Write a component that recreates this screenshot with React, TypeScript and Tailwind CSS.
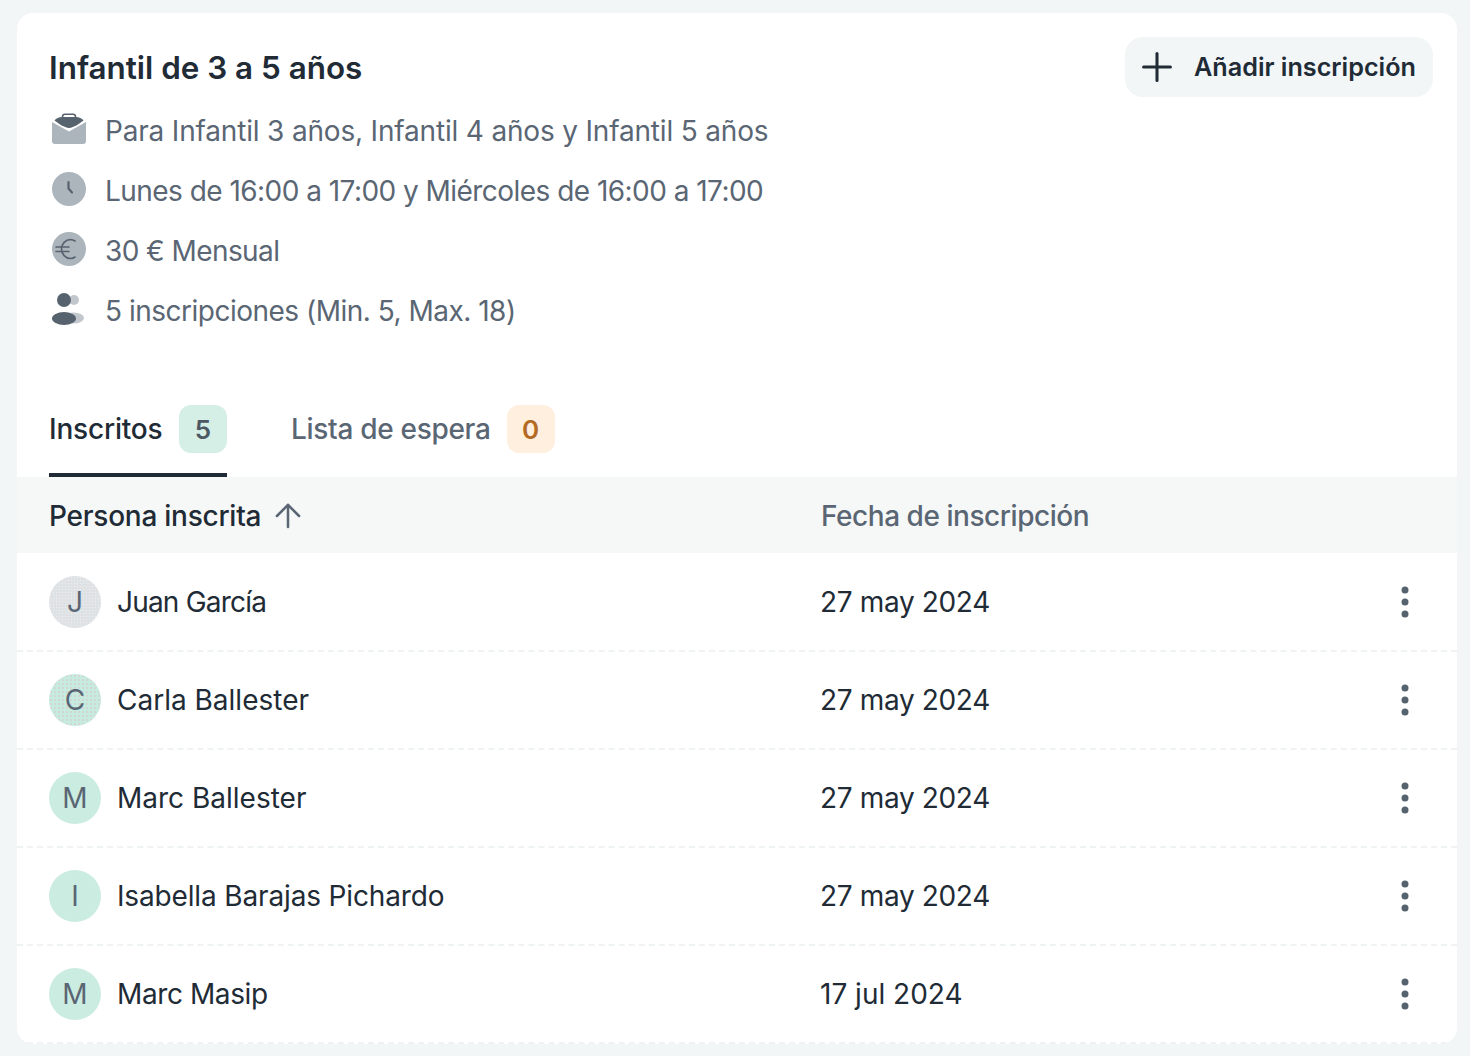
import { ArrowUp, Plus } from "lucide-react";
import type { ReactNode } from "react";

const rows = [
  { name: "Juan García", initial: "J", date: "27 may 2024", tone: "grey", nameFit: "tracking-[-0.8px]", dateFit: "tracking-[-0.35px]" },
  { name: "Carla Ballester", initial: "C", date: "27 may 2024", tone: "dots", nameFit: "", dateFit: "tracking-[-0.35px]" },
  { name: "Marc Ballester", initial: "M", date: "27 may 2024", tone: "green", nameFit: "", dateFit: "tracking-[-0.35px]" },
  { name: "Isabella Barajas Pichardo", initial: "I", date: "27 may 2024", tone: "green", nameFit: "tracking-[-0.15px]", dateFit: "tracking-[-0.35px]" },
  { name: "Marc Masip", initial: "M", date: "17 jul 2024", tone: "green", nameFit: "tracking-[-0.4px]", dateFit: "" },
];

function BriefcaseIcon() {
  return (
    <svg width="36" height="36" viewBox="0 0 36 36" fill="none">
      <path d="M1 11l17 9.500L35 11v19a3 3 0 0 1-3 3H4a3 3 0 0 1-3-3z" fill="#acb4bc" />
      <path d="M3.500 9.500C5 7.500 8 6 11 6h14c3 0 6 1.500 7.500 3.500C28 13 23 16.500 18 17 13 16.500 8 13 3.500 9.500z" fill="#57626f" />
      <path d="M11.500 6.500V5.500C11.500 4 12.500 3.200 14 3.200h8c1.500 0 2.500.8 2.500 2.300v1" stroke="#57626f" strokeWidth="1.600" />
    </svg>
  );
}

function ClockIcon() {
  return (
    <svg width="36" height="36" viewBox="0 0 36 36" fill="none">
      <circle cx="18" cy="18" r="17" fill="#acb4bc" />
      <path d="M17.500 11v6.500l3.500 4" stroke="#57626f" strokeWidth="2.200" strokeLinecap="round" strokeLinejoin="round" />
    </svg>
  );
}

function EuroIcon() {
  return (
    <svg width="36" height="36" viewBox="0 0 36 36" fill="none">
      <circle cx="18" cy="18" r="17" fill="#acb4bc" />
      <path d="M24 10a9 9 0 0 0-4.500-1.500c-5 0-9 4.500-9 9.500s4 9.500 9 9.500A9 9 0 0 0 24 26M5 16h13M5 20.500h13" stroke="#57626f" strokeWidth="1.600" strokeLinecap="round" />
    </svg>
  );
}

function PeopleIcon() {
  return (
    <svg width="36" height="36" viewBox="0 0 36 36" fill="none">
      <circle cx="23" cy="9" r="5" fill="#c2c7cd" />
      <ellipse cx="22" cy="27" rx="11" ry="5.500" fill="#c2c7cd" />
      <circle cx="13" cy="9" r="7" fill="#57626f" />
      <ellipse cx="13" cy="27.500" rx="12" ry="6.500" fill="#57626f" />
    </svg>
  );
}

function InfoRow({ icon, fit, children }: { icon: ReactNode; fit: string; children: ReactNode }) {
  return (
    <div className="flex h-[60px] items-center gap-[18px]">
      <div className="-mt-[4px] ml-[2px] flex h-[36px] w-[36px] items-center justify-center">{icon}</div>
      <span className={`text-[28px] text-[#5a6673] ${fit}`}>{children}</span>
    </div>
  );
}

function Avatar({ initial, tone }: { initial: string; tone: string }) {
  const toneClass =
    tone === "grey"
      ? "bg-[#dfe2e5] bg-[radial-gradient(#eceef0_1px,transparent_1px)] bg-[length:3px_3px]"
      : tone === "dots"
        ? "bg-[#c6ecdf] bg-[radial-gradient(#d4d6d6_0.8px,transparent_0.8px)] bg-[length:4px_4px]"
        : "bg-[#cbece1]";
  return (
    <div className={`flex h-[52px] w-[52px] shrink-0 items-center justify-center rounded-full text-[28px] text-[#5a6673] ${toneClass}`}>
      {initial}
    </div>
  );
}

export default function App() {
  return (
    <div className="h-[1056px] w-[1470px] overflow-hidden bg-[#f2f6f6] pl-[17px] pr-[13px] pt-[13px] font-['Inter',sans-serif] text-[#212b36]">
      <div className="h-[1031px] overflow-hidden rounded-[16px] bg-white">
        <div className="relative h-[464px] pl-[32px] pt-[24px]">
          <div className="flex h-[60px] items-center pt-[4px]">
            <h1 className="text-[31.4px] font-semibold">Infantil de 3 a 5 años</h1>
          </div>
          <button className="absolute right-[24px] top-[24px] flex h-[60px] w-[308px] items-center gap-[14px] rounded-[18px] bg-[#f2f6f6] pl-[9px] text-[25.2px] font-semibold">
            <Plus size={46} strokeWidth={1.6} className="shrink-0" />
            <span className="pt-[2px]">Añadir inscripción</span>
          </button>

          <div className="mt-[4px]">
            <InfoRow icon={<BriefcaseIcon />} fit="tracking-[-0.18px]">Para Infantil 3 años, Infantil 4 años y Infantil 5 años</InfoRow>
            <InfoRow icon={<ClockIcon />} fit="tracking-[-0.54px]">Lunes de 16:00 a 17:00 y Miércoles de 16:00 a 17:00</InfoRow>
            <InfoRow icon={<EuroIcon />} fit="tracking-[-0.58px]">30 € Mensual</InfoRow>
            <InfoRow icon={<PeopleIcon />} fit="tracking-[-0.5px]">5 inscripciones (Min. 5, Max. 18)</InfoRow>
          </div>

          <div className="mt-[64px] flex gap-[64px]">
            <div className="flex h-[72px] w-[178px] items-start justify-between border-b-[4px] border-[#212b36]">
              <span className="flex h-[48px] items-center text-[28px] font-medium tracking-[-0.2px]">Inscritos</span>
              <span className="flex h-[48px] w-[48px] items-center justify-center rounded-[12px] bg-[#d5eee6] text-[26px] font-semibold text-[#4c5864]">5</span>
            </div>
            <div className="flex h-[72px] items-start gap-[16px]">
              <span className="flex h-[48px] items-center text-[28px] font-medium tracking-[-0.3px] text-[#5a6673]">Lista de espera</span>
              <span className="flex h-[48px] w-[48px] items-center justify-center rounded-[12px] bg-[#ffefdf] text-[26px] font-semibold text-[#b36b24]">0</span>
            </div>
          </div>
        </div>

        <div className="grid h-[76px] grid-cols-[772px_1fr] items-center bg-[#f6f8f8] pl-[32px] pt-[2px] text-[28px] font-medium">
          <div className="flex items-center gap-[8px]">
            <span className="tracking-[-0.25px]">Persona inscrita</span>
            <ArrowUp size={38} strokeWidth={1.6} className="-my-[8px] text-[#5a6673]" />
          </div>
          <span className="tracking-[-0.45px] text-[#5a6673]">Fecha de inscripción</span>
        </div>

        <div className="mt-[1px]">
          {rows.map((row) => (
            <div
              key={row.name}
              className="grid h-[98px] grid-cols-[771px_1fr_auto] items-center border-b-2 border-dashed border-[#eff3f3] pl-[32px] pr-[48px] text-[28px]"
            >
              <div className="flex items-center gap-[16px]">
                <Avatar initial={row.initial} tone={row.tone} />
                <span className={row.nameFit}>{row.name}</span>
              </div>
              <span className={row.dateFit}>{row.date}</span>
              <svg width="8" height="32" viewBox="0 0 8 32" fill="#57626f">
                <circle cx="4" cy="4" r="3.500" />
                <circle cx="4" cy="16" r="3.500" />
                <circle cx="4" cy="28" r="3.500" />
              </svg>
            </div>
          ))}
        </div>
      </div>
    </div>
  );
}
